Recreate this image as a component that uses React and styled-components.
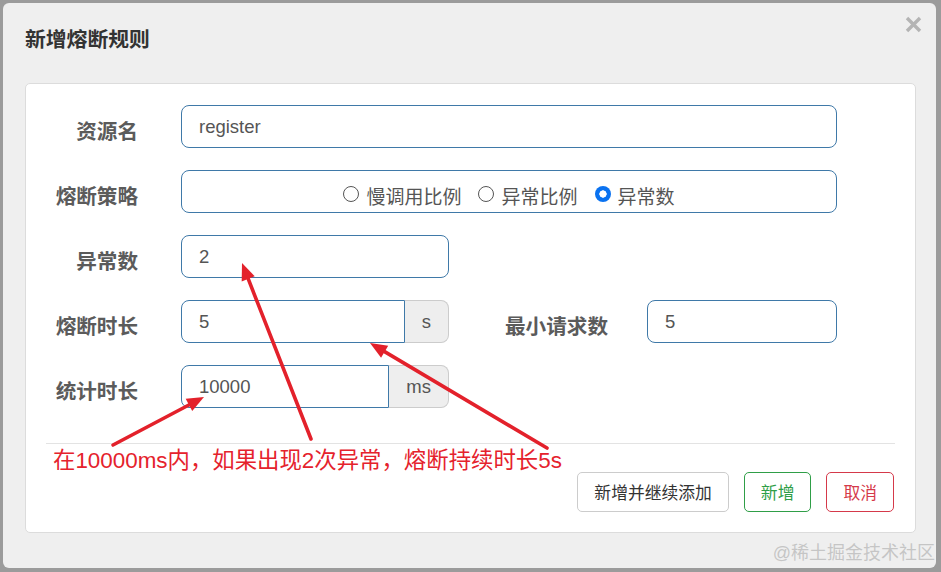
import React from "react";
import styled, { createGlobalStyle } from "styled-components";

const Global = createGlobalStyle`
  html, body { margin: 0; padding: 0; }
  body { background: #9b9b9b; font-family: "Liberation Sans", "Noto Sans CJK SC", sans-serif; }
  * { box-sizing: border-box; }
`;

const CJK = `"Liberation Sans", "Noto Sans CJK SC", sans-serif`;

const Page = styled.div`
  position: relative;
  width: 941px;
  height: 572px;
  padding: 3px 0 0 3px;
  overflow: hidden;
  background: #9b9b9b;
`;

const Modal = styled.div`
  width: 933px;
  height: 565px;
  background: #efefef;
  border-radius: 6px;
  display: flex;
  flex-direction: column;
`;

const Header = styled.div`
  height: 80px;
  display: flex;
  justify-content: space-between;
  align-items: flex-start;
  padding: 0 14px 0 22px;
`;

const Title = styled.h4`
  margin: 23px 0 0;
  font-family: ${CJK};
  font-size: 20.8px;
  line-height: 28px;
  font-weight: bold;
  color: #333;
`;

const Close = styled.button`
  margin-top: 12px;
  padding: 0;
  width: 18px;
  height: 18px;
  border: none;
  background: transparent;
  display: flex;
  align-items: center;
  justify-content: center;
`;

const Card = styled.div`
  margin: 0 20px 0 22px;
  height: 450px;
  background: #fff;
  border: 1px solid #dcdcdc;
  border-radius: 5px;
  padding-top: 21px;
  display: flex;
  flex-direction: column;
`;

const Form = styled.div`
  display: flex;
  flex-direction: column;
  gap: 22px;
`;

const Row = styled.div`
  display: flex;
  align-items: flex-start;
  height: 43px;
`;

const Label = styled.div`
  flex-shrink: 0;
  width: ${(p) => p.$w || 112}px;
  margin-right: ${(p) => p.$gap || 43}px;
  text-align: right;
  font-family: ${CJK};
  font-size: 20.6px;
  font-weight: bold;
  color: #5b5b5b;
  line-height: 43px;
  padding-top: 5px;
  white-space: nowrap;
`;

const Field = styled.div`
  width: ${(p) => (p.$w ? `${p.$w}px` : "auto")};
  flex: ${(p) => (p.$grow ? 1 : "none")};
  height: 43px;
  border: 1px solid #3f79a8;
  border-radius: ${(p) => (p.$grouped ? "8px 0 0 8px" : "8px")};
  padding: 0 17px;
  display: flex;
  align-items: center;
  font-family: ${CJK};
  font-size: 18.5px;
  color: #555;
  background: #fff;
`;

const RadioBox = styled(Field)`
  justify-content: center;
  align-items: center;
  padding-top: 7px;
  gap: 17px;
  font-size: 19px;
`;

const RadioItem = styled.label`
  display: flex;
  align-items: center;
  gap: 7px;
  color: #555;
  font-family: ${CJK};
`;

const RadioDot = styled.span`
  width: 16px;
  height: 16px;
  border-radius: 50%;
  margin-top: -3px;
  border: ${(p) => (p.$on ? "none" : "1.3px solid #555")};
  background: ${(p) =>
    p.$on ? "radial-gradient(circle, #fff 0 3.4px, #0a72f0 3.9px)" : "#fff"};
`;

const Group = styled.div`
  display: flex;
  width: 268px;
  flex-shrink: 0;
`;

const Addon = styled.div`
  height: 43px;
  padding: 0 17px;
  display: flex;
  align-items: center;
  background: #eee;
  border: 1px solid #ccc;
  border-left: none;
  border-radius: 0 8px 8px 0;
  font-family: ${CJK};
  font-size: 18.5px;
  color: #555;
`;

const Divider = styled.div`
  margin: 35px 20px 0;
  height: 1px;
  background: #e3e3e3;
`;

const Buttons = styled.div`
  margin-top: 28px;
  display: flex;
  justify-content: flex-end;
  gap: 15px;
  padding-right: 21px;
`;

const Btn = styled.button`
  height: 40px;
  padding: 0 16px;
  background: #fff;
  border: 1px solid ${(p) => p.$border};
  color: ${(p) => p.$color};
  border-radius: 5px;
  font-family: ${CJK};
  font-size: 16.8px;
`;

const Overlay = styled.svg`
  position: absolute;
  left: 0;
  top: 0;
  pointer-events: none;
`;

const Note = styled.div`
  position: absolute;
  left: 53px;
  top: 446px;
  font-family: ${CJK};
  font-size: 22.4px;
  line-height: 30px;
  color: #e5222c;
  white-space: nowrap;
`;

const Watermark = styled.div`
  position: absolute;
  right: 6px;
  top: 540px;
  font-family: ${CJK};
  font-size: 18px;
  line-height: 26px;
  color: rgba(190, 190, 190, 0.85);
  white-space: nowrap;
`;

function Arrow({ x1, y1, x2, y2 }) {
  const dx = x2 - x1;
  const dy = y2 - y1;
  const len = Math.hypot(dx, dy);
  const ux = dx / len;
  const uy = dy / len;
  const hl = 17;
  const hw = 7;
  const bx = x2 - ux * hl;
  const by = y2 - uy * hl;
  const px = -uy * hw;
  const py = ux * hw;
  return (
    <g>
      <line x1={x1} y1={y1} x2={bx + ux * 2} y2={by + uy * 2} stroke="#e3212b" strokeWidth="3.6" strokeLinecap="round" />
      <polygon points={`${x2},${y2} ${bx + px},${by + py} ${bx - px},${by - py}`} fill="#e3212b" />
    </g>
  );
}

export default function App() {
  return (
    <>
      <Global />
      <Page>
        <Modal>
          <Header>
            <Title>新增熔断规则</Title>
            <Close aria-label="close">
              <svg width="17" height="17" viewBox="0 0 17 17">
                <path d="M2 2 L15 15 M15 2 L2 15" stroke="#b4b4b4" strokeWidth="3.4" />
              </svg>
            </Close>
          </Header>
          <Card>
            <Form>
              <Row>
                <Label>资源名</Label>
                <Field $w={656}>register</Field>
              </Row>
              <Row>
                <Label>熔断策略</Label>
                <RadioBox $w={656}>
                  <RadioItem><RadioDot />慢调用比例</RadioItem>
                  <RadioItem><RadioDot />异常比例</RadioItem>
                  <RadioItem><RadioDot $on />异常数</RadioItem>
                </RadioBox>
              </Row>
              <Row>
                <Label>异常数</Label>
                <Field $w={268}>2</Field>
              </Row>
              <Row>
                <Label>熔断时长</Label>
                <Group>
                  <Field $grow $grouped>5</Field>
                  <Addon>s</Addon>
                </Group>
                <Label $w={159} $gap={39}>最小请求数</Label>
                <Field $w={190}>5</Field>
              </Row>
              <Row>
                <Label>统计时长</Label>
                <Group>
                  <Field $grow $grouped>10000</Field>
                  <Addon>ms</Addon>
                </Group>
              </Row>
            </Form>
            <Divider />
            <Buttons>
              <Btn $border="#cccccc" $color="#333">新增并继续添加</Btn>
              <Btn $border="#2f9e47" $color="#2f9e47">新增</Btn>
              <Btn $border="#d5394a" $color="#d5394a">取消</Btn>
            </Buttons>
          </Card>
        </Modal>
        <Overlay width="941" height="572" viewBox="0 0 941 572">
          <Arrow x1={311} y1={439} x2={242} y2={263} />
          <Arrow x1={547} y1={448} x2={370} y2={343} />
          <Arrow x1={113} y1={445} x2={204} y2={397} />
        </Overlay>
        <Note>在10000ms内，如果出现2次异常，熔断持续时长5s</Note>
        <Watermark>@稀土掘金技术社区</Watermark>
      </Page>
    </>
  );
}
